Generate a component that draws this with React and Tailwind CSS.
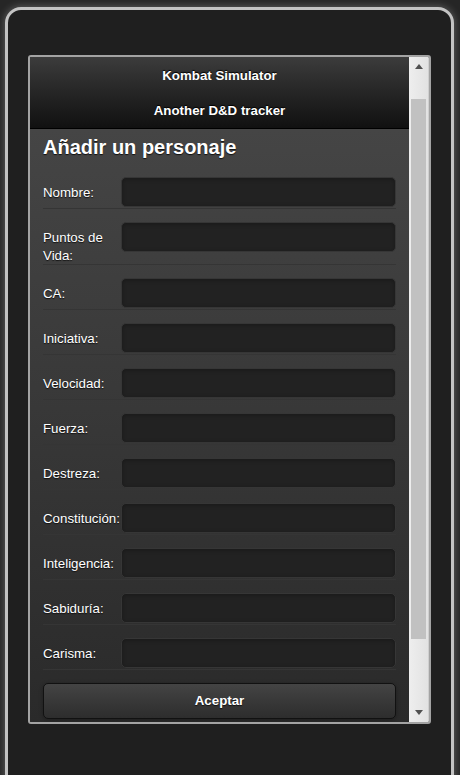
import React from "react";

const fields = [
  "Nombre:",
  "Puntos de Vida:",
  "CA:",
  "Iniciativa:",
  "Velocidad:",
  "Fuerza:",
  "Destreza:",
  "Constitución:",
  "Inteligencia:",
  "Sabiduría:",
  "Carisma:",
];

export default function App() {
  return (
    <div className="h-[775px] overflow-hidden bg-[#262626] pt-[7px] pl-[5px] pr-[6px] font-['Liberation_Sans',Arial,sans-serif]">
      <div className="h-[800px] rounded-t-[16px] border-[3px] border-[#c3c3c3] bg-[#1f1f1f] pl-[20px] pt-[45px] shadow-[0_0_8px_rgba(255,255,255,0.3)]">
        <div className="flex h-[669px] w-[403px] overflow-hidden rounded-[3px] border-2 border-[#a3a3a3]">
          <div className="flex w-[379px] flex-col">
            <div className="border-b border-[#000] bg-gradient-to-b from-[#3c3c3c] to-[#111111] pt-[1px]">
              <div className="flex h-[36px] items-center justify-center text-[13.3px] font-bold text-white [text-shadow:0_-1px_1px_#000]">
                Kombat Simulator
              </div>
              <div className="flex h-[34px] items-center justify-center text-[13.3px] font-bold text-white [text-shadow:0_-1px_1px_#000]">
                Another D&amp;D tracker
              </div>
            </div>
            <div className="flex-1 bg-gradient-to-b from-[#454545] to-[#2a2a2a] px-[13px] pt-[6px]">
              <h2 className="mb-[18px] text-[20px] font-bold leading-[24px] text-white [text-shadow:0_1px_1px_#111]">
                Añadir un personaje
              </h2>
              {fields.map((f) => (
                <div
                  key={f}
                  className="mb-[13px] flex items-start border-b border-[#353535] pb-[1px]"
                >
                  <label className="-mb-[2px] w-[78px] shrink-0 pt-[7px] text-[13.3px] leading-[18px] text-white [text-shadow:0_1px_1px_#111]">
                    {f}
                  </label>
                  <div className="h-[30px] flex-1 rounded-[5px] border border-[#363636] bg-[#222222] shadow-[inset_0_1px_4px_rgba(0,0,0,0.3)]" />
                </div>
              ))}
              <button className="flex h-[36px] w-full items-center justify-center rounded-[5px] border border-[#111] bg-gradient-to-b from-[#444444] to-[#2d2d2d] text-[13.3px] font-bold text-white shadow-[0_1px_4px_rgba(0,0,0,0.3)] [text-shadow:0_1px_1px_#111]">
                Aceptar
              </button>
            </div>
          </div>
          <div className="flex w-[20px] flex-col border-r border-[#cfcfcf] bg-gradient-to-r from-[#eeeeee] to-[#e2e2e2]">
            <div className="flex h-[17px] items-center justify-center pt-[1px]">
              <div className="h-0 w-0 border-x-[4px] border-b-[5px] border-x-transparent border-b-[#505050]" />
            </div>
            <div className="h-[25px]" />
            <div className="mx-[2px] h-[540px] bg-[#c1c1c1]" />
            <div className="flex-1" />
            <div className="flex h-[17px] items-center justify-center pb-[2px]">
              <div className="h-0 w-0 border-x-[4px] border-t-[5px] border-x-transparent border-t-[#505050]" />
            </div>
          </div>
        </div>
      </div>
    </div>
  );
}
